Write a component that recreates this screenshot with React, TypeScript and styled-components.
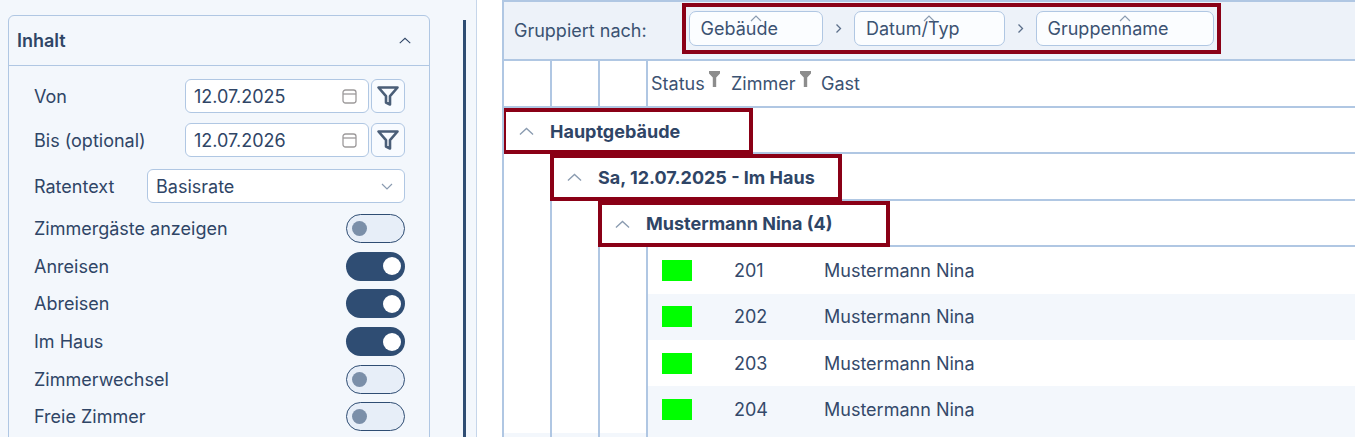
import React from "react";
import styled, { createGlobalStyle } from "styled-components";

const NAVY = "#2f4566";
const LINE = "#b0c7e3";
const DARK = "#2f4d73";
const MARK = "#8a0016";
const MUTED = "#8a9bb0";

const GlobalStyle = createGlobalStyle`
  html, body {
    margin: 0;
    padding: 0;
    background: #fff;
  }
  body {
    font-family: Inter, "Noto Sans", sans-serif;
    color: ${NAVY};
  }
  * {
    box-sizing: border-box;
  }
`;

const Page = styled.div`
  display: flex;
  width: 1355px;
  height: 437px;
  overflow: hidden;
  background: #fff;
`;

/* ---------- sidebar ---------- */

const Sidebar = styled.aside`
  display: flex;
  align-items: flex-start;
  flex-shrink: 0;
  width: 477px;
  height: 100%;
  padding: 15px 0 0 8px;
  background: #f3f7fc;
  border-right: 1px solid #c6d6ea;
  overflow: hidden;
`;

const Card = styled.section`
  flex-shrink: 0;
  width: 422px;
  height: 440px;
  border: 1px solid ${LINE};
  border-radius: 6px 6px 0 0;
`;

const CardHeader = styled.header`
  display: flex;
  align-items: center;
  justify-content: space-between;
  height: 50px;
  padding: 0 18px 0 8px;
  border-bottom: 1px solid ${LINE};
  font-size: 18px;
  font-weight: 600;
`;

const CardBody = styled.div`
  display: flex;
  flex-direction: column;
  padding: 13px 24px 0 25px;
`;

const FieldRow = styled.div<{ $mb?: number }>`
  display: flex;
  align-items: center;
  justify-content: space-between;
  height: 34px;
  margin-bottom: ${({ $mb }) => $mb ?? 0}px;
`;

const ToggleRow = styled.div`
  display: flex;
  align-items: center;
  justify-content: space-between;
  height: 37.6px;
`;

const Label = styled.span`
  font-size: 18px;
  color: ${NAVY};
`;

const DateGroup = styled.div`
  display: flex;
  gap: 2px;
`;

const InputBox = styled.div<{ $w: number }>`
  display: flex;
  align-items: center;
  justify-content: space-between;
  width: ${({ $w }) => $w}px;
  height: 34px;
  padding: 0 11px 0 8px;
  background: #fff;
  border: 1px solid ${LINE};
  border-radius: 6px;
  font-size: 18px;
  color: ${NAVY};
`;

const IconButton = styled.button`
  display: flex;
  align-items: center;
  justify-content: center;
  width: 34px;
  height: 34px;
  padding: 0;
  background: #f8fbff;
  border: 1px solid ${LINE};
  border-radius: 6px;
`;

const Toggle = styled.div<{ $on?: boolean }>`
  display: flex;
  align-items: center;
  justify-content: ${({ $on }) => ($on ? "flex-end" : "flex-start")};
  width: 59px;
  height: 29px;
  padding: ${({ $on }) => ($on ? "0 4px" : "0 5px")};
  border-radius: 15px;
  background: ${({ $on }) => ($on ? DARK : "#e7eef8")};
  border: ${({ $on }) => ($on ? "none" : `1.5px solid ${DARK}`)};
`;

const Knob = styled.span<{ $on?: boolean }>`
  width: ${({ $on }) => ($on ? 18 : 15)}px;
  height: ${({ $on }) => ($on ? 18 : 15)}px;
  border-radius: 50%;
  background: ${({ $on }) => ($on ? "#fff" : "#7b8fa9")};
`;

const ScrollThumb = styled.div`
  flex-shrink: 0;
  align-self: stretch;
  width: 3px;
  margin: 5px 0 0 33px;
  background: ${DARK};
`;

/* ---------- grid ---------- */

const Main = styled.main`
  flex: 1;
  height: 100%;
  padding-left: 25px;
  background: #fff;
`;

const Grid = styled.div`
  display: flex;
  flex-direction: column;
  height: 100%;
  overflow: hidden;
  border-left: 2px solid ${LINE};
`;

const Toolbar = styled.div`
  display: flex;
  align-items: flex-start;
  flex-shrink: 0;
  height: 61px;
  padding-left: 10px;
  background: #edf2f9;
  border-top: 2px solid ${LINE};
  border-bottom: 2px solid ${LINE};
`;

const ToolbarLabel = styled.span`
  align-self: center;
  font-size: 18px;
  color: #3b5272;
`;

const GroupPanel = styled.div`
  display: flex;
  align-items: center;
  margin: 1px 0 0 35px;
  padding: 4px 3px;
  border: 4px solid ${MARK};
`;

const Chip = styled.div`
  position: relative;
  display: flex;
  align-items: center;
  height: 35px;
  padding: 0 44px 0 11px;
  background: #fbfdff;
  border: 1px solid ${LINE};
  border-radius: 7px;
  font-size: 18px;
  color: #3b5272;
`;

const ChipCaret = styled.svg`
  position: absolute;
  top: 3px;
  left: 50%;
  margin-left: -6px;
`;

const Separator = styled.span`
  display: flex;
  align-items: center;
  justify-content: center;
  width: 31px;
`;

const HeaderRow = styled.div`
  display: flex;
  flex-shrink: 0;
  height: 47px;
  border-bottom: 2px solid ${LINE};
`;

const Indent = styled.div<{ $alt?: boolean }>`
  flex-shrink: 0;
  width: 48px;
  height: 100%;
  border-right: 2px solid ${LINE};
  background: ${({ $alt }) => ($alt ? "#f3f7fc" : "#fff")};
`;

const HeadCell = styled.div<{ $w?: number }>`
  display: flex;
  align-items: center;
  flex: ${({ $w }) => ($w ? "none" : "1")};
  width: ${({ $w }) => ($w ? `${$w}px` : "auto")};
  padding-left: 3px;
  font-size: 18px;
  color: #3b5272;
`;

const HeadFilter = styled.svg`
  margin: 0 0 9px 4px;
`;

const GroupRow = styled.div`
  display: flex;
  flex-shrink: 0;
  height: 46.4px;
`;

const GroupLabel = styled.div<{ $w: number }>`
  display: flex;
  align-items: center;
  flex-shrink: 0;
  gap: 16px;
  width: ${({ $w }) => $w}px;
  height: 100%;
  margin-left: -2px;
  padding-left: 13px;
  border: 4px solid ${MARK};
  font-size: 18px;
  font-weight: 700;
  color: ${NAVY};
  background: #fff;
`;

const RowFill = styled.div`
  flex: 1;
  height: 100%;
  border-bottom: 2px solid ${LINE};
`;

const DataRow = styled.div`
  display: flex;
  flex-shrink: 0;
  height: 46.4px;
`;

const DataCells = styled.div<{ $alt?: boolean }>`
  display: flex;
  align-items: center;
  flex: 1;
  background: ${({ $alt }) => ($alt ? "#f3f7fc" : "#fff")};
  font-size: 18px;
  color: #34496a;
`;

const Cell = styled.div<{ $w?: number; $pad?: number }>`
  flex: ${({ $w }) => ($w ? "none" : "1")};
  width: ${({ $w }) => ($w ? `${$w}px` : "auto")};
  padding-left: ${({ $pad }) => $pad ?? 6}px;
`;

const StatusSwatch = styled.div`
  width: 30px;
  height: 21px;
  background: #00ff00;
`;

/* ---------- icons ---------- */

function ChevronUp({ color = MUTED, w = 15 }: { color?: string; w?: number }) {
  return (
    <svg width={w} height={w / 2 + 1} viewBox="0 0 16 9" fill="none">
      <polyline points="1,8 8,1.5 15,8" stroke={color} strokeWidth="1.4" />
    </svg>
  );
}

function ChevronDown() {
  return (
    <svg width="12" height="7" viewBox="0 0 12 7" fill="none">
      <polyline points="1,1 6,6 11,1" stroke={MUTED} strokeWidth="1.2" />
    </svg>
  );
}

function CalendarIcon() {
  return (
    <svg width="15" height="15" viewBox="0 0 15 15" fill="none">
      <rect x="1" y="1" width="13" height="13" rx="2.5" stroke="#9d9a9b" strokeWidth="1.3" />
      <line x1="1" y1="5" x2="14" y2="5" stroke="#9d9a9b" strokeWidth="1.3" />
    </svg>
  );
}

function FunnelIcon() {
  return (
    <svg width="24" height="22" viewBox="0 0 24 22" fill="none">
      <path
        d="M2.5 2.5H21.5L14 11.2V19.5L10 17.5V11.2Z"
        stroke="#4a5e78"
        strokeWidth="2.6"
        strokeLinejoin="round"
      />
    </svg>
  );
}

function SmallFunnel() {
  return (
    <HeadFilter width="11" height="16" viewBox="0 0 11 16">
      <path d="M0 0H11V2.5L7.2 6.5V16H3.8V6.5L0 2.5Z" fill="#8c8c8c" />
    </HeadFilter>
  );
}

function SeparatorIcon() {
  return (
    <svg width="7" height="11" viewBox="0 0 7 11" fill="none">
      <polyline points="1.5,1.5 5.5,5.5 1.5,9.5" stroke="#5b6f8a" strokeWidth="1.3" />
    </svg>
  );
}

/* ---------- data ---------- */

const toggles = [
  { label: "Zimmergäste anzeigen", on: false },
  { label: "Anreisen", on: true },
  { label: "Abreisen", on: true },
  { label: "Im Haus", on: true },
  { label: "Zimmerwechsel", on: false },
  { label: "Freie Zimmer", on: false },
];

const groupChips = ["Gebäude", "Datum/Typ", "Gruppenname"];

const groups = [
  { level: 0, text: "Hauptgebäude", width: 251 },
  { level: 1, text: "Sa, 12.07.2025 - Im Haus", width: 292 },
  { level: 2, text: "Mustermann Nina (4)", width: 292 },
];

const rooms = ["201", "202", "203", "204"];

function Indents({ count, alt }: { count: number; alt?: boolean }) {
  return (
    <>
      {Array.from({ length: count }).map((_, i) => (
        <Indent key={i} $alt={alt} />
      ))}
    </>
  );
}

export default function App() {
  return (
    <>
      <GlobalStyle />
      <Page>
        <Sidebar>
          <Card>
            <CardHeader>
              Inhalt
              <ChevronUp color={NAVY} w={12} />
            </CardHeader>
            <CardBody>
              <FieldRow $mb={10}>
                <Label>Von</Label>
                <DateGroup>
                  <InputBox $w={184}>
                    12.07.2025
                    <CalendarIcon />
                  </InputBox>
                  <IconButton>
                    <FunnelIcon />
                  </IconButton>
                </DateGroup>
              </FieldRow>
              <FieldRow $mb={12}>
                <Label>Bis (optional)</Label>
                <DateGroup>
                  <InputBox $w={184}>
                    12.07.2026
                    <CalendarIcon />
                  </InputBox>
                  <IconButton>
                    <FunnelIcon />
                  </IconButton>
                </DateGroup>
              </FieldRow>
              <FieldRow $mb={7}>
                <Label>Ratentext</Label>
                <InputBox $w={258}>
                  Basisrate
                  <ChevronDown />
                </InputBox>
              </FieldRow>
              {toggles.map((t) => (
                <ToggleRow key={t.label}>
                  <Label>{t.label}</Label>
                  <Toggle $on={t.on}>
                    <Knob $on={t.on} />
                  </Toggle>
                </ToggleRow>
              ))}
            </CardBody>
          </Card>
          <ScrollThumb />
        </Sidebar>

        <Main>
          <Grid>
            <Toolbar>
              <ToolbarLabel>Gruppiert nach:</ToolbarLabel>
              <GroupPanel>
                {groupChips.map((c, i) => (
                  <React.Fragment key={c}>
                    {i > 0 && (
                      <Separator>
                        <SeparatorIcon />
                      </Separator>
                    )}
                    <Chip>
                      <ChipCaret width="12" height="7" viewBox="0 0 12 7" fill="none">
                        <polyline points="1,6 6,1 11,6" stroke={MUTED} strokeWidth="1.2" />
                      </ChipCaret>
                      {c}
                    </Chip>
                  </React.Fragment>
                ))}
              </GroupPanel>
            </Toolbar>

            <HeaderRow>
              <Indents count={3} />
              <HeadCell $w={80}>
                Status
                <SmallFunnel />
              </HeadCell>
              <HeadCell $w={90}>
                Zimmer
                <SmallFunnel />
              </HeadCell>
              <HeadCell>Gast</HeadCell>
            </HeaderRow>

            {groups.map((g) => (
              <GroupRow key={g.text}>
                <Indents count={g.level} />
                <GroupLabel $w={g.width}>
                  <ChevronUp />
                  {g.text}
                </GroupLabel>
                <RowFill />
              </GroupRow>
            ))}

            {rooms.map((r, i) => (
              <DataRow key={r}>
                <Indents count={3} />
                <DataCells $alt={i % 2 === 1}>
                  <Cell $w={80} $pad={14}>
                    <StatusSwatch />
                  </Cell>
                  <Cell $w={90}>{r}</Cell>
                  <Cell>Mustermann Nina</Cell>
                </DataCells>
              </DataRow>
            ))}

            <DataRow>
              <Indents count={3} alt />
              <DataCells $alt />
            </DataRow>
          </Grid>
        </Main>
      </Page>
    </>
  );
}
